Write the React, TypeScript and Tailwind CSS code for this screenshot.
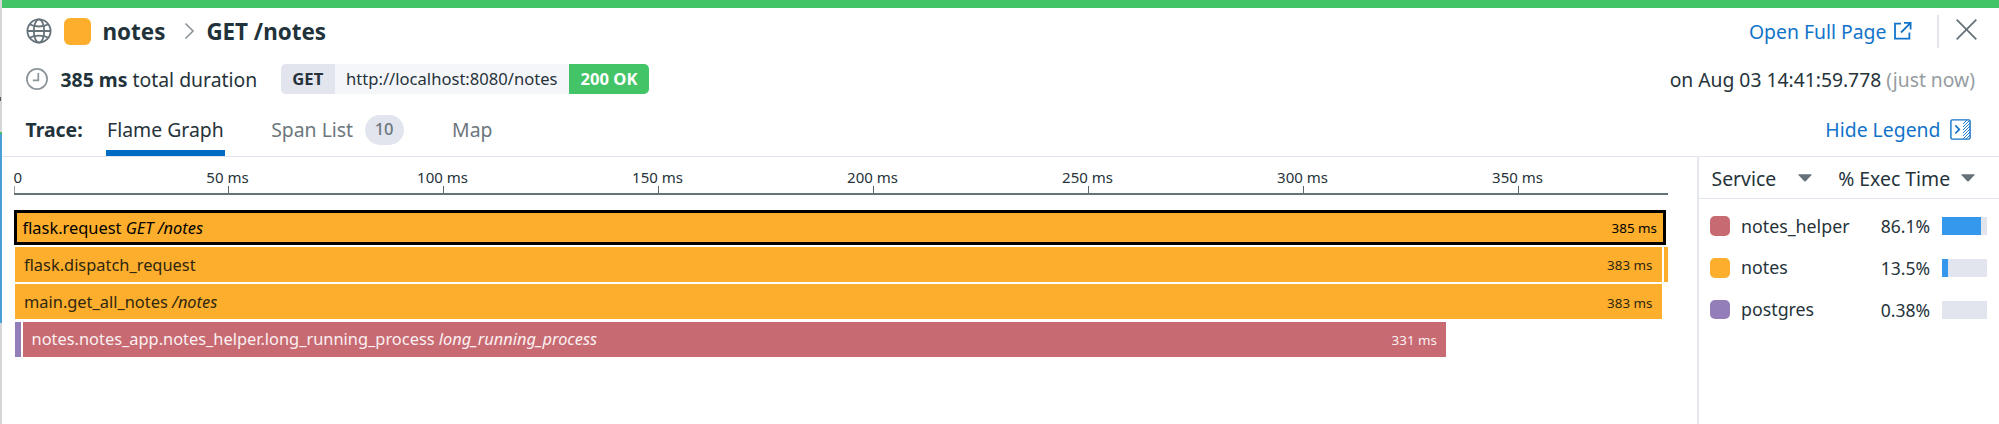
import type { ReactNode } from "react";

const ticks = ["50 ms", "100 ms", "150 ms", "200 ms", "250 ms", "300 ms", "350 ms"];

const services = [
  { name: "notes_helper", share: "86.1%", fill: 39.3, color: "bg-[#c86a72]" },
  { name: "notes", share: "13.5%", fill: 6.5, color: "bg-[#fdae2c]" },
  { name: "postgres", share: "0.38%", fill: 0, color: "bg-[#937eba]" },
];

function GlobeIcon() {
  return (
    <svg width="26" height="26" viewBox="0 0 26 26" fill="none" stroke="#66727a" strokeWidth="1.8">
      <circle cx="13" cy="13" r="11.6" />
      <ellipse cx="13" cy="13" rx="5.2" ry="11.6" />
      <path d="M1.4 13H24.6M3.6 6.3C8.5 9.2 17.5 9.2 22.4 6.3M3.6 19.7C8.5 16.8 17.5 16.8 22.4 19.7" />
    </svg>
  );
}

function ClockIcon() {
  return (
    <svg width="22" height="22" viewBox="0 0 22 22" fill="none" stroke="#8b9499" strokeWidth="1.7">
      <circle cx="11" cy="11" r="10.1" />
      <path d="M12.3 5V12.4H6.8" />
    </svg>
  );
}

function OpenIcon() {
  return (
    <svg width="20" height="20" viewBox="0 0 20 20" fill="none" stroke="#1273c9" strokeWidth="1.8">
      <path d="M8 2.6H2V17.6H16.4V11.5M11 1.9H17.6V8.5M17.3 2.2L8 11.5" />
    </svg>
  );
}

function LegendIcon() {
  return (
    <svg width="21" height="21" viewBox="0 0 21 21" fill="none" stroke="#1273c9">
      <rect x="0.9" y="0.9" width="19.2" height="19.2" rx="1.4" strokeWidth="1.4" />
      <path d="M5.3 6.3L9.3 10.4L5.3 14.5" strokeWidth="1.7" />
      <path
        d="M13 5L17 1M13 8L20 1M13 11L20 4M13 14L20 7M13 17L20 10M13 20L20 13M16 20L20 16"
        strokeWidth="0.9"
      />
    </svg>
  );
}

function Caret() {
  return (
    <svg width="14" height="8" viewBox="0 0 14 8" fill="#66727a">
      <path d="M0.9 0.3H13.1Q13.8 0.5 13.3 1.2L8 7Q7 7.8 6 7L0.7 1.2Q0.2 0.5 0.9 0.3Z" />
    </svg>
  );
}

function SpanBar({ className, label, time }: { className: string; label: ReactNode; time: string }) {
  return (
    <div className={`flex h-[35px] items-center justify-between text-[16.4px] leading-none ${className}`}>
      <span className="pt-px">{label}</span>
      <span className="pt-[3px] text-[13.4px]">{time}</span>
    </div>
  );
}

function EdgeStrip() {
  return (
    <div className="flex w-[2px] shrink-0 flex-col bg-[#d6d6d8]">
      <div className="h-[97px]" />
      <div className="h-[4px] w-px bg-[#55595e]" />
      <div className="h-[31px]" />
      <div className="h-[2px] bg-[#41c464]" />
      <div className="h-[189px] bg-[#4a9fd4]" />
    </div>
  );
}

export default function App() {
  return (
    <div className="flex h-[424px] w-[1999px] overflow-hidden bg-white font-['Noto_Sans',sans-serif] text-[19.4px] leading-none whitespace-nowrap text-[#26333a]">
      <EdgeStrip />
      <div className="flex min-w-0 flex-1 flex-col">
        <div className="h-[7.5px] shrink-0 bg-[#43c466]" />

        <header className="flex h-[47.5px] shrink-0 items-center pr-[22.5px] pl-[23.5px]">
          <GlobeIcon />
          <div className="ml-[12.5px] size-[27px] rounded-[6px] bg-[#fdae2c]" />
          <span className="ml-[11.5px] pt-[2px] text-[22.4px] font-bold text-[#22323a]">notes</span>
          <svg className="ml-[19px]" width="11" height="18" viewBox="0 0 11 18" fill="none" stroke="#8b9499" strokeWidth="1.6">
            <path d="M1.5 1.5L9 9L1.5 16.5" />
          </svg>
          <span className="ml-[11px] pt-[2px] text-[22.4px] font-bold text-[#22323a]">GET /notes</span>
          <a className="ml-auto pt-px text-[#1273c9]">Open Full Page</a>
          <span className="ml-[6px]"><OpenIcon /></span>
          <div className="ml-[24.5px] h-[33px] w-[2px] bg-[#e2e4ee]" />
          <svg className="mb-[3px] ml-[16.5px]" width="21" height="21" viewBox="0 0 21 21" stroke="#66727a" strokeWidth="1.8">
            <path d="M0.7 0.7L20.3 20.3M20.3 0.7L0.7 20.3" />
          </svg>
        </header>

        <div className="flex h-[48px] shrink-0 items-center pr-[24px] pl-[24px]">
          <ClockIcon />
          <span className="ml-[12.5px] pt-px">
            <b className="font-bold text-[#22323a]">385 ms</b> total duration
          </span>
          <div className="ml-[23.5px] flex h-[30px] overflow-hidden rounded-[5px] text-[16.6px]">
            <span className="flex w-[54px] items-center justify-center bg-[#e2e4ee] pt-px font-bold">GET</span>
            <span className="flex w-[234px] items-center justify-center bg-[#f5f6fa] pt-px">http://localhost:8080/notes</span>
            <span className="flex w-[80.5px] items-center justify-center bg-[#43c466] pt-px font-bold text-white">200 OK</span>
          </div>
          <span className="ml-auto pt-px text-[19.3px]">
            on Aug 03 14:41:59.778 <span className="text-[#959da1]">(just now)</span>
          </span>
        </div>

        <nav className="flex h-[54px] shrink-0 items-center border-b border-[#e2e4ee] pr-[28px] pl-[23.5px]">
          <b className="pt-px font-bold text-[#22323a]">Trace:</b>
          <div className="ml-[23px] flex w-[119.5px] items-center justify-center self-stretch border-y-6 border-t-transparent border-b-[#006bc2] pt-px">
            Flame Graph
          </div>
          <span className="ml-[46px] pt-px text-[#6c777d]">Span List</span>
          <span className="ml-[11.5px] flex h-[30px] w-[39px] items-center justify-center rounded-full bg-[#e2e4ee] text-[16.5px] font-medium text-[#6c777d]">
            10
          </span>
          <span className="ml-[48.5px] pt-px text-[#6c777d]">Map</span>
          <a className="ml-auto pt-px text-[#1273c9]">Hide Legend</a>
          <span className="ml-[9.5px]"><LegendIcon /></span>
        </nav>

        <main className="flex min-h-0 flex-1">
          <section className="w-[1694.5px] shrink-0 pl-[11px]">
            <div className="mt-[11.5px] ml-[0.5px] flex h-[26.5px] w-[1654px] border-b-2 border-[#66727a] text-[15px]">
              <div className="flex w-[214px] flex-col justify-between">
                <span className="leading-[17px]">0</span>
                <div className="h-[8px] w-[1.5px] bg-[#9aa1a5]" />
              </div>
              {ticks.map((t) => (
                <div key={t} className="flex w-[215px] shrink-0 flex-col justify-between last:w-[148px]">
                  <span className="w-fit -translate-x-1/2 leading-[17px]">{t}</span>
                  <div className="h-[8px] w-[1.5px] bg-[#5b666d]" />
                </div>
              ))}
            </div>
            <div className="mt-[15px] flex flex-col gap-[2.2px]">
              <SpanBar
                className="ml-[0.5px] w-[1652.5px] border-3 border-black bg-[#fdae2c] px-[6px] text-black"
                label={<>flask.request <i>GET /notes</i></>}
                time="385 ms"
              />
              <div className="flex gap-[2px] pl-[2px]">
                <SpanBar
                  className="w-[1646.5px] bg-[#fdae2c] px-[9px] text-[#2f2710]"
                  label="flask.dispatch_request"
                  time="383 ms"
                />
                <div className="w-[4px] bg-[#fdae2c]" />
              </div>
              <SpanBar
                className="ml-[2px] w-[1646.5px] bg-[#fdae2c] px-[9px] text-[#2f2710]"
                label={<>main.get_all_notes <i>/notes</i></>}
                time="383 ms"
              />
              <div className="flex gap-[1.5px] pl-[2px]">
                <div className="w-[6px] bg-[#937eba]" />
                <SpanBar
                  className="w-[1423.5px] bg-[#c86a72] px-[9px] text-[#fbf0f1]"
                  label={<>notes.notes_app.notes_helper.long_running_process <i>long_running_process</i></>}
                  time="331 ms"
                />
              </div>
            </div>
          </section>

          <aside className="flex-1 border-l-2 border-[#e6e8f1]">
            <div className="flex h-[42px] items-center border-b border-[#e2e4ee] pl-[13px]">
              <span className="pt-[2px]">Service</span>
              <span className="ml-[22px]"><Caret /></span>
              <span className="ml-[26px] pt-[2px]">% Exec Time</span>
              <span className="ml-[10.5px]"><Caret /></span>
            </div>
            <div className="flex flex-col gap-[22px] pt-[17.3px] pl-[11.5px] text-[17.8px]">
              {services.map((s) => (
                <div key={s.name} className="flex h-[19.7px] items-center">
                  <div className={`size-[19.5px] rounded-[5px] ${s.color}`} />
                  <span className="ml-[11.5px] w-[138.5px] pt-px">{s.name}</span>
                  <span className="w-[50.5px] pt-[2px] text-right text-[17.5px]">{s.share}</span>
                  <div className="ml-[11.5px] flex h-[18px] w-[45px] bg-[#e2e4ee]">
                    <div className="bg-[#3598ec]" style={{ width: s.fill }} />
                  </div>
                </div>
              ))}
            </div>
          </aside>
        </main>
      </div>
    </div>
  );
}
